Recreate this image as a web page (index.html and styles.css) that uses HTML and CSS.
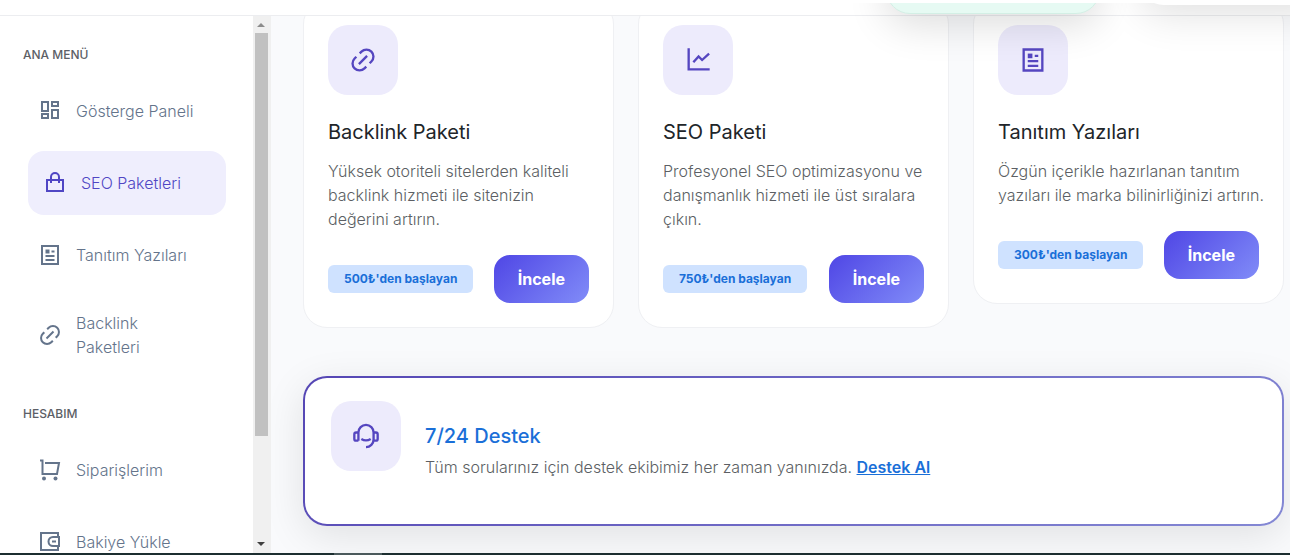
FILE: index.html
```html
<!DOCTYPE html>
<html lang="tr">
<head>
    <meta charset="UTF-8">
    <meta name="viewport" content="width=device-width, initial-scale=1.0">
    <title>SEO Paketleri</title>
    <link rel="stylesheet" href="styles.css">
</head>
<body>
    <!-- Icon set -->
    <svg class="icon-defs" aria-hidden="true">
        <symbol id="icon-dashboard" viewBox="0 0 24 24"><path d="M4 3h6v9H4zM14 3h6v4h-6zM14 11h6v8h-6zM4 15h6v4H4z"/></symbol>
        <symbol id="icon-bag" viewBox="0 0 24 24"><path d="M4 9h16v11H4zM8 12V6a4 4 0 0 1 8 0v6"/></symbol>
        <symbol id="icon-article" viewBox="0 0 24 24"><path d="M4 3h16v18H4zM7.500 13h9M7.500 17h9M13.500 8.500h3"/><path d="M8.500 7.500h2v2h-2z"/></symbol>
        <symbol id="icon-link" viewBox="0 0 24 24"><path d="M9.2 6.3l1.5-1.5a6 6 0 0 1 8.5 8.5l-1.500 1.500M14.800 17.700l-1.500 1.500a6 6 0 0 1-8.500-8.500l1.500-1.500M8.500 15.500l7-7"/></symbol>
        <symbol id="icon-chart" viewBox="0 0 24 24"><path d="M4 2v18h18M8 14l4.500-5 3 3 6-5.500"/></symbol>
        <symbol id="icon-cart" viewBox="0 0 24 24"><path d="M2 2.500h2.500V16h14.500l2-11H7"/><circle class="dot" cx="6" cy="20.500" r="2"/><circle class="dot" cx="17.500" cy="20.500" r="2"/></symbol>
        <symbol id="icon-wallet" viewBox="0 0 24 24"><path d="M20 7V3H3v17h17v-3M21 7h-6a4.500 4.500 0 0 0 0 9h6zM14 11.500h4"/></symbol>
        <symbol id="icon-support" viewBox="0 0 24 24"><path d="M5.500 16V9a6.500 6.500 0 0 1 13 0v6a6.500 6.500 0 0 1-6.500 6.500M5.500 9H3.500a1.500 1.500 0 0 0-1.500 1.500v4A1.500 1.500 0 0 0 3.500 16h2M18.500 9h2a1.500 1.500 0 0 1 1.500 1.500v4a1.500 1.500 0 0 1-1.500 1.500h-2M8 14.500c2.500 1.600 5.500 1.600 8 0"/></symbol>
    </svg>

    <header class="topbar">
        <div class="toast toast-success"></div>
        <div class="toast toast-panel"></div>
    </header>

    <div class="layout">
        <aside class="sidebar">
            <nav class="menu">
                <h6 class="menu-title">ANA MENÜ</h6>
                <a href="#" class="menu-link"><svg class="icon"><use href="#icon-dashboard"/></svg><span>Gösterge Paneli</span></a>
                <a href="#" class="menu-link active"><svg class="icon"><use href="#icon-bag"/></svg><span>SEO Paketleri</span></a>
                <a href="#" class="menu-link"><svg class="icon"><use href="#icon-article"/></svg><span>Tanıtım Yazıları</span></a>
                <a href="#" class="menu-link"><svg class="icon"><use href="#icon-link"/></svg><span>Backlink<br>Paketleri</span></a>
                <h6 class="menu-title">HESABIM</h6>
                <a href="#" class="menu-link"><svg class="icon"><use href="#icon-cart"/></svg><span>Siparişlerim</span></a>
                <a href="#" class="menu-link"><svg class="icon"><use href="#icon-wallet"/></svg><span>Bakiye Yükle</span></a>
            </nav>
            <div class="scrollbar">
                <span class="scroll-arrow up"></span>
                <span class="scroll-thumb"></span>
                <span class="scroll-arrow down"></span>
            </div>
        </aside>

        <main class="content">
            <div class="card-grid">
                <article class="card">
                    <div class="icon-box"><svg class="icon"><use href="#icon-link"/></svg></div>
                    <h5 class="card-title">Backlink Paketi</h5>
                    <p class="card-text">Yüksek otoriteli sitelerden kaliteli backlink hizmeti ile sitenizin değerini artırın.</p>
                    <div class="card-footer">
                        <span class="badge">500₺'den başlayan</span>
                        <button type="button" class="btn">İncele</button>
                    </div>
                </article>
                <article class="card">
                    <div class="icon-box"><svg class="icon"><use href="#icon-chart"/></svg></div>
                    <h5 class="card-title">SEO Paketi</h5>
                    <p class="card-text">Profesyonel SEO optimizasyonu ve danışmanlık hizmeti ile üst sıralara çıkın.</p>
                    <div class="card-footer">
                        <span class="badge">750₺'den başlayan</span>
                        <button type="button" class="btn">İncele</button>
                    </div>
                </article>
                <article class="card">
                    <div class="icon-box"><svg class="icon"><use href="#icon-article"/></svg></div>
                    <h5 class="card-title">Tanıtım Yazıları</h5>
                    <p class="card-text two-lines">Özgün içerikle hazırlanan tanıtım<br>yazıları ile marka bilinirliğinizi artırın.</p>
                    <div class="card-footer">
                        <span class="badge">300₺'den başlayan</span>
                        <button type="button" class="btn">İncele</button>
                    </div>
                </article>
            </div>

            <section class="support">
                <div class="icon-box"><svg class="icon"><use href="#icon-support"/></svg></div>
                <div class="support-body">
                    <h5 class="support-title">7/24 Destek</h5>
                    <p class="card-text">Tüm sorularınız için destek ekibimiz her zaman yanınızda. <a href="#" class="support-link">Destek Al</a></p>
                </div>
            </section>
        </main>
    </div>
    <div class="taskbar"><span class="taskbar-item"></span></div>
</body>
</html>
```
FILE: styles.css
```css
* {
    box-sizing: border-box;
    margin: 0;
    padding: 0;
}

body {
    display: flex;
    flex-direction: column;
    height: 100vh;
    overflow: hidden;
    background: #f9fafc;
    color: #212529;
    font-family: Inter, sans-serif;
    font-size: 16px;
    font-weight: 300;
    line-height: 24px;
}

.icon-defs {
    display: none;
}

.icon {
    flex: none;
    width: 24px;
    height: 24px;
    fill: none;
    stroke: currentColor;
    stroke-width: 2;
}

.dot {
    fill: currentColor;
    stroke: none;
}

/* Top bar */
.topbar {
    position: fixed;
    top: 0;
    left: 0;
    right: 0;
    z-index: 10;
    height: 16px;
    background: #fff;
    border-bottom: 1px solid #ecedf0;
}

.topbar::after {
    content: "";
    position: absolute;
    top: 0;
    left: 0;
    right: 0;
    height: 3px;
    background: #fff;
}

.toast {
    position: absolute;
    height: 60px;
    border-radius: 24px;
}

.toast-success {
    right: 190px;
    bottom: 1px;
    width: 214px;
    background: #e6faf3;
    border: 1px solid #d3efe5;
    box-shadow: 0 10px 40px rgba(0, 0, 0, 0.14);
}

.toast-panel {
    right: -40px;
    bottom: 10px;
    width: 190px;
    background: #fff;
    box-shadow: 0 10px 40px rgba(0, 0, 0, 0.12);
}

.layout {
    display: flex;
    flex: 1;
    min-height: 0;
}

/* Sidebar */
.sidebar {
    display: flex;
    flex: none;
    width: 271px;
    padding-top: 16px;
    background: #fff;
}

.menu {
    display: flex;
    flex: 1;
    flex-direction: column;
    padding: 8px 32px 0 23px;
    overflow: hidden;
}

.menu-title {
    flex: none;
    margin: 21px 0 14px;
    font-size: 12px;
    font-weight: 500;
    line-height: 20px;
    color: #5c6066;
}

.menu-link {
    display: flex;
    flex: none;
    align-items: center;
    gap: 14px;
    min-height: 64px;
    margin-bottom: 8px;
    padding: 16px 15px;
    border-radius: 16px;
    color: #64748b;
    text-decoration: none;
}

.menu-link.active {
    margin-left: 5px;
    margin-right: -5px;
    background: #efeefd;
    color: #5046c4;
}

.scrollbar {
    display: flex;
    flex-direction: column;
    align-items: center;
    width: 18px;
    padding: 7px 2px 7px 0;
    background: #f0f0f0;
}

.scroll-thumb {
    width: 13px;
    height: 77%;
    margin-top: 6px;
    background: #c1c1c1;
}

.scroll-arrow {
    border: 4px solid transparent;
}

.scroll-arrow.up {
    border-top: 0;
    border-bottom-color: #8c8c8c;
}

.scroll-arrow.down {
    margin-top: auto;
    border-bottom: 0;
    border-top-color: #404040;
}

/* Package cards */
.content {
    flex: 1;
    min-width: 0;
    padding: 0 6px 0 32px;
    overflow: hidden;
}

.card-grid {
    display: grid;
    grid-template-columns: repeat(3, 1fr);
    align-items: start;
    gap: 24px;
    margin-bottom: 48px;
}

.card {
    min-width: 0;
    padding: 24px;
    background: #fff;
    border: 1px solid #eff0f3;
    border-radius: 24px;
}

.icon-box {
    display: flex;
    flex: none;
    align-items: center;
    justify-content: center;
    width: 70px;
    height: 70px;
    border-radius: 20px;
    background: #edebfc;
    color: #5546c0;
}

.icon-box .icon {
    width: 28px;
    height: 28px;
}

.card-title {
    margin: 24px 0 14px;
    font-size: 20px;
    font-weight: 400;
    line-height: 26px;
}

.card-text {
    color: #5c5f64;
}

.two-lines {
    white-space: nowrap;
}

.card-footer {
    display: flex;
    align-items: center;
    justify-content: space-between;
    margin-top: 24px;
}

.badge {
    padding: 6px 16px;
    border-radius: 6px;
    background: #cfe2ff;
    color: #1a6fd8;
    font-size: 12px;
    font-weight: 700;
    line-height: 16px;
    white-space: nowrap;
}

.btn {
    padding: 12px 24px;
    border: none;
    border-radius: 16px;
    background: linear-gradient(135deg, #4f46e5, #818cf8);
    color: #fff;
    font: inherit;
    font-weight: 700;
    cursor: pointer;
}

/* Support box */
.support {
    display: flex;
    gap: 24px;
    padding: 23px 26px;
    border: 2px solid transparent;
    border-radius: 24px;
    background: linear-gradient(#fff, #fff) padding-box, linear-gradient(135deg, #5546b4, #8488d4) border-box;
    box-shadow: 0 10px 40px rgba(0, 0, 0, 0.1);
}

.support-body {
    padding: 22px 0;
}

.support-title {
    margin-bottom: 6px;
    color: #1a6fd8;
    font-size: 20px;
    font-weight: 500;
    line-height: 26px;
}

.support-link {
    color: #1a6fd8;
    font-weight: 600;
}

.taskbar {
    display: flex;
    flex: none;
    height: 2px;
    padding-left: 334px;
    background: #1c2e30;
}

.taskbar-item {
    width: 48px;
    background: #4b5a5c;
}
```
